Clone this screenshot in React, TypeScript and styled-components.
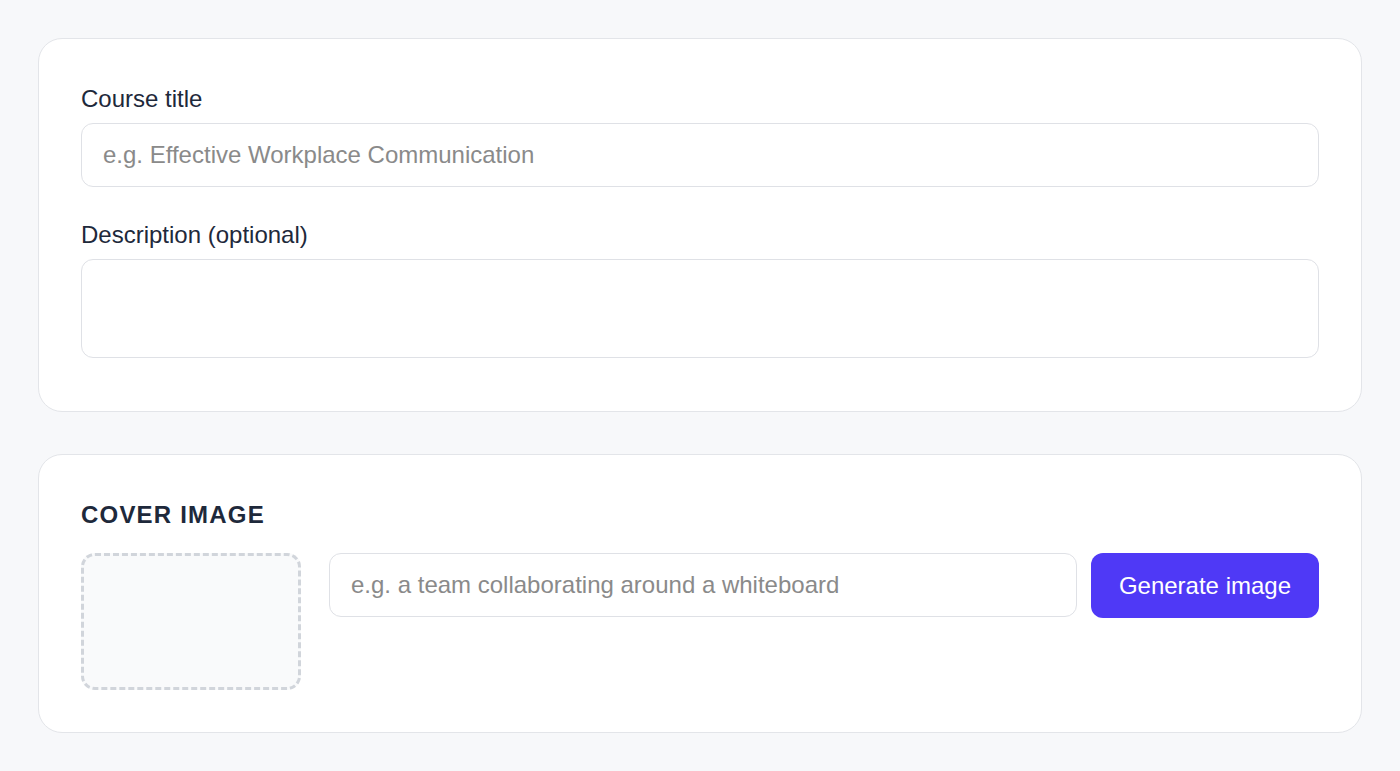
import React from "react";
import styled, { createGlobalStyle } from "styled-components";

const GlobalStyle = createGlobalStyle`
  * { box-sizing: border-box; }
  html, body {
    margin: 0;
    padding: 0;
    background: #f7f8fa;
    font-family: "Liberation Sans", Arial, sans-serif;
  }
`;

const Page = styled.div`
  padding: 38px;
  display: flex;
  flex-direction: column;
  gap: 42px;
  min-height: 771px;
  background: #f7f8fa;
`;

const Card = styled.section`
  background: #ffffff;
  border: 1.5px solid #e3e5e9;
  border-radius: 24px;
  padding: 42px;
`;

const Form = styled.div`
  display: flex;
  flex-direction: column;
  gap: 30px;
`;

const Field = styled.label`
  display: flex;
  flex-direction: column;
  gap: 6px;
`;

const LabelText = styled.span`
  font-size: 24px;
  line-height: 36px;
  color: #1e293b;
`;

const inputBase = `
  width: 100%;
  font-family: "Liberation Sans", Arial, sans-serif;
  font-size: 24px;
  line-height: 36px;
  color: #1e293b;
  background: #ffffff;
  border: 1.5px solid #dfe1e6;
  border-radius: 12px;
  padding: 12px 21px;
  outline: none;
  &::placeholder { color: #8a8a8a; opacity: 1; }
`;

const TextInput = styled.input`
  ${inputBase}
  height: 64px;
`;

const TextArea = styled.textarea`
  ${inputBase}
  display: block;
  height: 99px;
  resize: none;
  margin-bottom: 11px;
`;

const SectionTitle = styled.h2`
  margin: 0 0 20px 0;
  font-size: 24px;
  line-height: 36px;
  font-weight: 700;
  letter-spacing: 0.05em;
  text-transform: uppercase;
  color: #1e293b;
`;

const CoverRow = styled.div`
  display: flex;
  align-items: flex-start;
`;

const Placeholder = styled.div`
  width: 220px;
  height: 137px;
  flex: none;
  border: 3px dashed #d1d5db;
  border-radius: 14px;
  background: #f9fafb;
  margin-right: 28px;
`;

const PromptInput = styled.input`
  ${inputBase}
  flex: 1;
  height: 64px;
  margin-right: 14px;
`;

const GenerateButton = styled.button`
  flex: none;
  height: 65px;
  padding: 0 28px;
  border: none;
  border-radius: 12px;
  background: #4f39f6;
  color: #ffffff;
  font-family: "Liberation Sans", Arial, sans-serif;
  font-size: 24px;
  cursor: pointer;
`;

export default function App() {
  return (
    <>
      <GlobalStyle />
      <Page>
        <Card>
          <Form>
            <Field>
              <LabelText>Course title</LabelText>
              <TextInput placeholder="e.g. Effective Workplace Communication" />
            </Field>
            <Field>
              <LabelText>Description (optional)</LabelText>
              <TextArea />
            </Field>
          </Form>
        </Card>
        <Card>
          <SectionTitle>Cover image</SectionTitle>
          <CoverRow>
            <Placeholder />
            <PromptInput placeholder="e.g. a team collaborating around a whiteboard" />
            <GenerateButton>Generate image</GenerateButton>
          </CoverRow>
        </Card>
      </Page>
    </>
  );
}
